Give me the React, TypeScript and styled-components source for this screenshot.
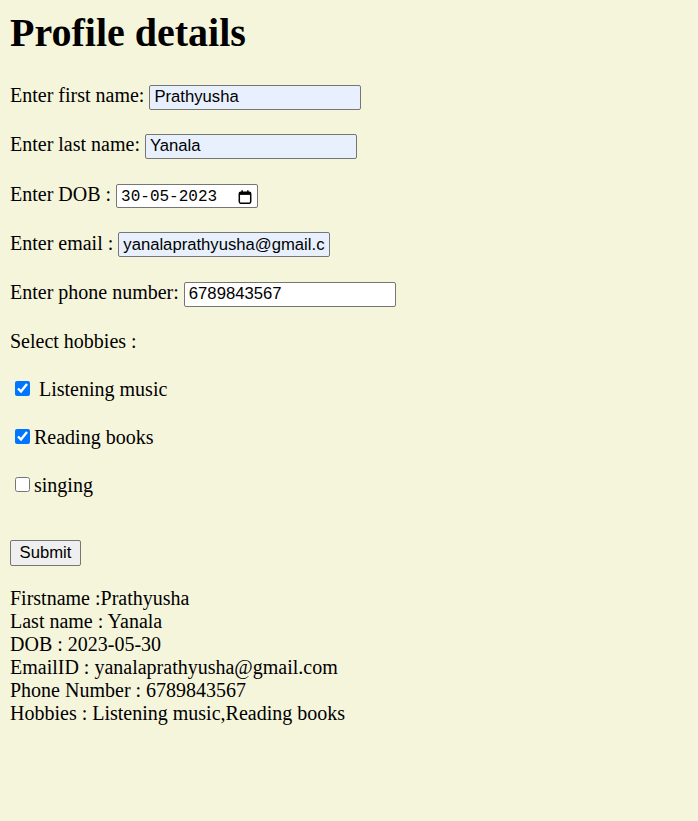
import React from "react";
import styled, { createGlobalStyle } from "styled-components";

const GlobalStyle = createGlobalStyle`
  html, body {
    margin: 0;
    padding: 0;
    background: #f5f5dc;
  }
  body {
    font-family: "Liberation Serif", "Times New Roman", serif;
    font-size: 20px;
    color: #000;
  }
`;

const Page = styled.div`
  padding: 10px;
  min-height: 801px;
  background: #f5f5dc;
`;

const Title = styled.h1`
  margin: 0 0 28px;
  font-size: 40px;
  line-height: 46px;
  font-weight: bold;
`;

const Form = styled.form`
  display: flex;
  flex-direction: column;
  align-items: flex-start;
`;

const FieldRow = styled.div`
  display: flex;
  align-items: baseline;
  gap: 5px;
  height: 25px;
  margin-bottom: 24.25px;
  line-height: 23px;
`;

const Label = styled.label`
  font-size: 20px;
  line-height: 23px;
  white-space: pre;
`;

const TextInput = styled.input<{ $autofilled?: boolean }>`
  box-sizing: border-box;
  width: 212px;
  height: 25px;
  padding: 0 4px;
  border: 1px solid #767676;
  border-radius: 2px;
  background: ${(p) => (p.$autofilled ? "#e8f0fe" : "#ffffff")};
  font-family: "Liberation Sans", Arial, sans-serif;
  font-size: 16.67px;
  color: #000;
  outline: none;
`;

const DateBox = styled.div`
  box-sizing: border-box;
  display: inline-flex;
  align-items: center;
  justify-content: space-between;
  width: 142px;
  height: 24px;
  padding: 2px 5px 0 4px;
  border: 1px solid #767676;
  border-radius: 2px;
  background: #fff;
  font-family: "Liberation Mono", "DejaVu Sans Mono", monospace;
  font-size: 16px;
  line-height: 18px;
`;

const HobbiesHeading = styled.div`
  height: 23px;
  line-height: 23px;
  margin-bottom: 24.5px;
`;

const CheckRow = styled.label`
  display: flex;
  align-items: flex-start;
  height: 23px;
  line-height: 23px;
  margin-bottom: 25px;
`;

const Check = styled.input`
  width: 15px;
  height: 15px;
  margin: 3px 4px 0 5px;
  accent-color: #0075ff;
`;

const SubmitButton = styled.button`
  box-sizing: border-box;
  margin-top: 18.25px;
  width: 71px;
  height: 26px;
  padding: 0 7px;
  border: 1px solid #767676;
  border-radius: 2px;
  background: #efefef;
  font-family: "Liberation Sans", Arial, sans-serif;
  font-size: 16.67px;
  color: #000;
`;

const Results = styled.div`
  margin-top: 20.8px;
  font-size: 20px;
  line-height: 23px;
`;

const CalendarIcon = () => (
  <svg width="14" height="14" viewBox="0 0 14 14" aria-hidden="true">
    <rect x="1.3" y="2.3" width="11.4" height="10.9" rx="1.4" fill="none" stroke="#000" strokeWidth="1.5" />
    <rect x="1.3" y="2.3" width="11.4" height="2.6" fill="#000" />
    <rect x="3.4" y="0.3" width="1.5" height="3" fill="#000" />
    <rect x="9.1" y="0.3" width="1.5" height="3" fill="#000" />
  </svg>
);

export default function App() {
  return (
    <Page>
      <GlobalStyle />
      <Title>Profile details</Title>
      <Form onSubmit={(e) => e.preventDefault()}>
        <FieldRow>
          <Label>Enter first name:</Label>
          <TextInput $autofilled readOnly value="Prathyusha" />
        </FieldRow>
        <FieldRow>
          <Label>Enter last name:</Label>
          <TextInput $autofilled readOnly value="Yanala" />
        </FieldRow>
        <FieldRow>
          <Label>Enter DOB :</Label>
          <DateBox>
            <span>30-05-2023</span>
            <CalendarIcon />
          </DateBox>
        </FieldRow>
        <FieldRow>
          <Label>Enter email :</Label>
          <TextInput $autofilled readOnly value="yanalaprathyusha@gmail.com" />
        </FieldRow>
        <FieldRow>
          <Label>Enter phone number:</Label>
          <TextInput readOnly value="6789843567" />
        </FieldRow>
        <HobbiesHeading>Select hobbies :</HobbiesHeading>
        <CheckRow>
          <Check type="checkbox" defaultChecked />
          <span>{"\u00a0"}Listening music</span>
        </CheckRow>
        <CheckRow>
          <Check type="checkbox" defaultChecked />
          <span>Reading books</span>
        </CheckRow>
        <CheckRow>
          <Check type="checkbox" />
          <span>singing</span>
        </CheckRow>
        <SubmitButton type="submit">Submit</SubmitButton>
      </Form>
      <Results>
        <div>Firstname :Prathyusha</div>
        <div>Last name : Yanala</div>
        <div>DOB : 2023-05-30</div>
        <div>EmailID : yanalaprathyusha@gmail.com</div>
        <div>Phone Number : 6789843567</div>
        <div>Hobbies : Listening music,Reading books</div>
      </Results>
    </Page>
  );
}
